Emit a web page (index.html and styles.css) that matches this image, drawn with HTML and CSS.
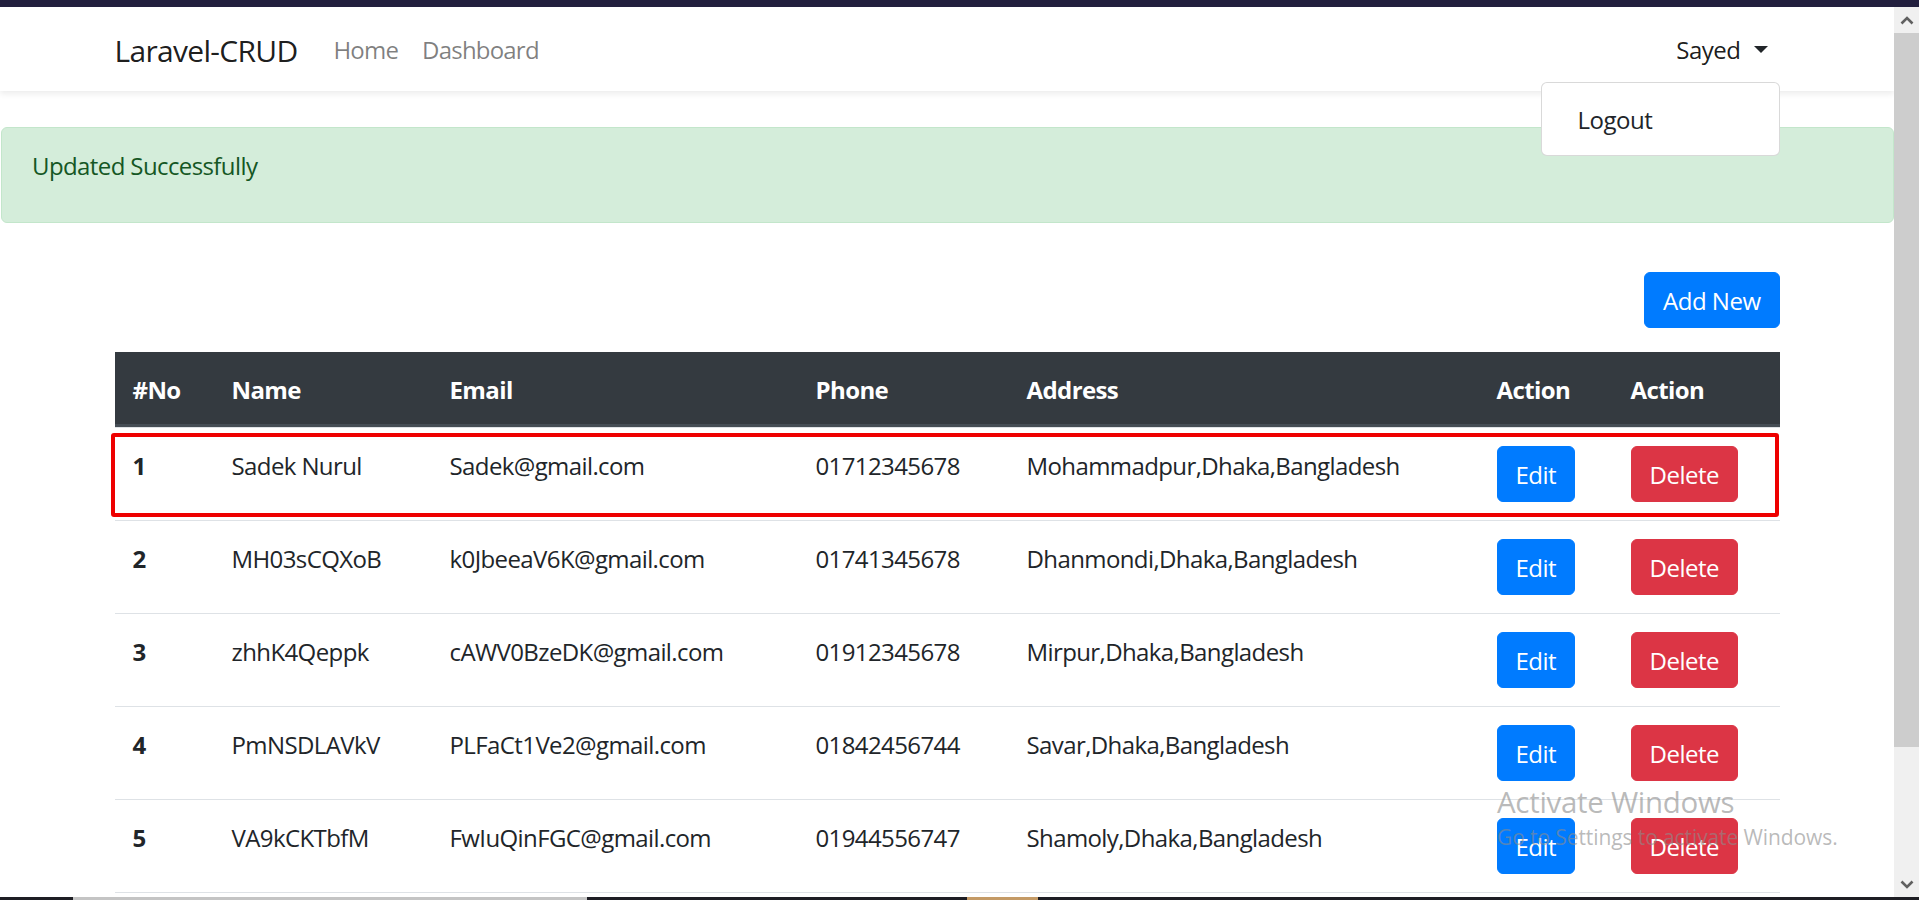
FILE: index.html
```html
<!DOCTYPE html>
<html lang="en">
<head>
<meta charset="utf-8">
<title>Laravel-CRUD</title>
<link rel="stylesheet" href="styles.css">
</head>
<body>
<div class="screen">
  <div class="topstrip"></div>
  <div class="viewport">
    <div class="page">
      <nav class="navbar">
        <div class="nav-container">
          <a class="brand" href="#">Laravel-CRUD</a>
          <ul class="nav-left">
            <li><a class="nav-link" href="#">Home</a></li>
            <li><a class="nav-link" href="#">Dashboard</a></li>
          </ul>
          <div class="nav-right">
            <div class="dropdown">
              <a class="nav-link nav-link-active" href="#">Sayed<span class="caret"></span></a>
              <div class="dropdown-menu">
                <a class="dropdown-item" href="#">Logout</a>
              </div>
            </div>
          </div>
        </div>
      </nav>

      <div class="alert">Updated Successfully</div>

      <div class="container">
        <div class="toolbar">
          <a class="btn btn-primary btn-add" href="#">Add New</a>
        </div>
        <div class="table-wrap">
          <table class="table">
            <colgroup>
              <col class="c-no"><col class="c-name"><col class="c-email"><col class="c-phone"><col class="c-addr"><col class="c-act1"><col class="c-act2">
            </colgroup>
            <thead>
              <tr>
                <th>#No</th><th>Name</th><th>Email</th><th>Phone</th><th>Address</th><th>Action</th><th>Action</th>
              </tr>
            </thead>
            <tbody>
              <tr>
                <th class="row-no">1</th><td>Sadek Nurul</td><td>Sadek@gmail.com</td><td>01712345678</td><td>Mohammadpur,Dhaka,Bangladesh</td>
                <td><a class="btn btn-primary" href="#">Edit</a></td><td><a class="btn btn-danger" href="#">Delete</a></td>
              </tr>
              <tr>
                <th class="row-no">2</th><td>MH03sCQXoB</td><td>k0JbeeaV6K@gmail.com</td><td>01741345678</td><td>Dhanmondi,Dhaka,Bangladesh</td>
                <td><a class="btn btn-primary" href="#">Edit</a></td><td><a class="btn btn-danger" href="#">Delete</a></td>
              </tr>
              <tr>
                <th class="row-no">3</th><td>zhhK4Qeppk</td><td>cAWV0BzeDK@gmail.com</td><td>01912345678</td><td>Mirpur,Dhaka,Bangladesh</td>
                <td><a class="btn btn-primary" href="#">Edit</a></td><td><a class="btn btn-danger" href="#">Delete</a></td>
              </tr>
              <tr>
                <th class="row-no">4</th><td>PmNSDLAVkV</td><td>PLFaCt1Ve2@gmail.com</td><td>01842456744</td><td>Savar,Dhaka,Bangladesh</td>
                <td><a class="btn btn-primary" href="#">Edit</a></td><td><a class="btn btn-danger" href="#">Delete</a></td>
              </tr>
              <tr>
                <th class="row-no">5</th><td>VA9kCKTbfM</td><td>FwIuQinFGC@gmail.com</td><td>01944556747</td><td>Shamoly,Dhaka,Bangladesh</td>
                <td><a class="btn btn-primary" href="#">Edit</a></td><td><a class="btn btn-danger" href="#">Delete</a></td>
              </tr>
            </tbody>
          </table>
          <div class="highlight"></div>
        </div>
      </div>
    </div>

    <div class="scrollbar">
      <div class="sb-button">
        <svg width="14" height="9" viewBox="0 0 14 9"><path d="M1.5 7.5 L7 2 L12.5 7.5" fill="none" stroke="#606060" stroke-width="2.6"/></svg>
      </div>
      <div class="sb-thumb"></div>
      <div class="sb-track"></div>
      <div class="sb-button">
        <svg width="14" height="9" viewBox="0 0 14 9"><path d="M1.5 1.5 L7 7 L12.5 1.5" fill="none" stroke="#606060" stroke-width="2.6"/></svg>
      </div>
    </div>
  </div>
  <div class="taskbar">
    <span class="tb-seg tb-dark tb-s1"></span>
    <span class="tb-seg tb-light tb-s2"></span>
    <span class="tb-seg tb-dark tb-s3"></span>
    <span class="tb-seg tb-tan tb-s4"></span>
    <span class="tb-seg tb-dark tb-s5"></span>
  </div>

  <div class="watermark">
    <div class="wm-title">Activate Windows</div>
    <div class="wm-sub">Go to Settings to activate Windows.</div>
  </div>
</div>
</body>
</html>
```

FILE: styles.css
```css
* { box-sizing: border-box; }

html, body {
  margin: 0;
  padding: 0;
  width: 1919px;
  height: 900px;
  overflow: hidden;
  background: #ffffff;
}

body {
  font-family: "Open Sans", "Noto Sans", sans-serif;
  font-size: 24px;
  line-height: 36px;
  color: #212529;
}

a { text-decoration: none; }

.screen {
  position: relative;
  width: 1919px;
  height: 900px;
  display: flex;
  flex-direction: column;
}

.topstrip {
  height: 7px;
  background: #221f3e;
  flex: none;
}

.viewport {
  height: 890px;
  display: flex;
  flex: none;
}

.page {
  width: 1894px;
  height: 890px;
  overflow: hidden;
  position: relative;
  background: #fff;
}

/* ---------- navbar ---------- */
.navbar {
  background: #fff;
  padding: 12px 0;
  box-shadow: 0 3px 6px rgba(0, 0, 0, 0.075);
  position: relative;
  z-index: 2;
}

.nav-container {
  width: 1665px;
  margin: 0 auto;
  display: flex;
  align-items: center;
}

.brand {
  font-size: 30px;
  line-height: 45px;
  padding: 8.5px 0 6.5px;
  margin-right: 24px;
  color: rgba(0, 0, 0, 0.9);
  letter-spacing: -0.7px;
}

.nav-left {
  list-style: none;
  margin: 0;
  padding: 0;
  display: flex;
}

.nav-link {
  display: block;
  padding: 13px 12px 11px;
  color: rgba(0, 0, 0, 0.5);
  letter-spacing: -0.8px;
}

.nav-link-active {
  color: rgba(0, 0, 0, 0.9);
  display: flex;
  align-items: center;
  letter-spacing: -0.5px;
}

.nav-right {
  margin-left: auto;
}

.dropdown {
  position: relative;
}

.caret {
  display: inline-block;
  width: 0;
  height: 0;
  margin-left: 13px;
  margin-top: -2px;
  border-top: 7px solid #212529;
  border-left: 7px solid transparent;
  border-right: 7px solid transparent;
}

.dropdown-menu {
  position: absolute;
  right: 0;
  top: calc(100% + 3px);
  min-width: 239px;
  padding: 13px 0 11px;
  background: #fff;
  border: 1.5px solid rgba(0, 0, 0, 0.15);
  border-radius: 6px;
}

.dropdown-item {
  display: block;
  padding: 6px 36px;
  color: #212529;
  letter-spacing: -0.5px;
}

/* ---------- alert ---------- */
.alert {
  margin-top: 36px;
  margin-left: 1px;
  padding: 20px 30px 38px;
  background: #d4edda;
  border: 1px solid #c3e6cb;
  border-radius: 6px;
  color: #155724;
  letter-spacing: -0.6px;
}

/* ---------- content ---------- */
.container {
  width: 1665px;
  margin: 0 auto;
}

.toolbar {
  display: flex;
  justify-content: flex-end;
  margin-top: 49px;
  margin-bottom: 24px;
}

.btn {
  display: inline-block;
  padding: 10px 18px 8px;
  border: 1px solid transparent;
  border-radius: 6px;
  color: #fff;
  line-height: 36px;
  letter-spacing: -0.5px;
  white-space: nowrap;
}

.btn-primary {
  background: #007bff;
  border-color: #007bff;
}

.btn-danger {
  background: #dc3545;
  border-color: #dc3545;
}

.table-wrap {
  position: relative;
}

.table {
  width: 100%;
  table-layout: fixed;
  border-collapse: separate;
  border-spacing: 0;
}

.c-no { width: 99px; }
.c-name { width: 218px; }
.c-email { width: 366px; }
.c-phone { width: 211px; }
.c-addr { width: 470px; }
.c-act1 { width: 134px; }
.c-act2 { width: 167px; }

.table thead th {
  background: #343a40;
  color: #fff;
  font-weight: 700;
  text-align: left;
  padding: 20px 18px 16px;
  border-bottom: 3px solid #454d55;
  letter-spacing: -0.6px;
  white-space: nowrap;
}

.table tbody td,
.table tbody th {
  padding: 18px 18px;
  border-top: 1px solid #dee2e6;
  vertical-align: top;
  text-align: left;
  white-space: nowrap;
  letter-spacing: -0.6px;
}

.table tbody td.txt,
.table tbody td:nth-child(-n+5),
.table tbody th.row-no {
  padding-top: 20px;
  padding-bottom: 16px;
}

.table tbody tr:last-child td,
.table tbody tr:last-child th {
  border-bottom: 1px solid #dee2e6;
}

.table tbody th.row-no {
  font-weight: 700;
}

.highlight {
  position: absolute;
  left: -4px;
  top: 81px;
  width: 1668px;
  height: 84px;
  border: 4px solid #ee0000;
  border-radius: 3px;
  pointer-events: none;
}

/* ---------- scrollbar ---------- */
.scrollbar {
  width: 25px;
  height: 890px;
  background: #f0f0f0;
  display: flex;
  flex-direction: column;
  flex: none;
}

.sb-button {
  height: 26px;
  flex: none;
  display: flex;
  align-items: center;
  justify-content: center;
  background: #f0f0f0;
}

.sb-thumb {
  height: 714px;
  flex: none;
  background: #cdcdcd;
}

.sb-track {
  flex: 1;
  background: #f0f0f0;
}

/* ---------- taskbar edge ---------- */
.taskbar {
  height: 3px;
  display: flex;
  flex: none;
}

.tb-seg { display: block; height: 3px; }
.tb-dark { background: #1e1e24; }
.tb-light { background: #c4c4c4; }
.tb-tan { background: #c49a66; }
.tb-s1 { width: 73px; }
.tb-s2 { width: 514px; }
.tb-s3 { width: 380px; }
.tb-s4 { width: 71px; }
.tb-s5 { flex: 1; }

/* ---------- watermark ---------- */
.watermark {
  position: absolute;
  left: 1497px;
  top: 783px;
  color: rgba(140, 140, 140, 0.6);
  pointer-events: none;
}

.wm-title {
  font-size: 29.5px;
  line-height: 38px;
  font-weight: 400;
  letter-spacing: -0.3px;
}

.wm-sub {
  font-size: 21px;
  line-height: 32px;
  letter-spacing: -0.1px;
}
```
